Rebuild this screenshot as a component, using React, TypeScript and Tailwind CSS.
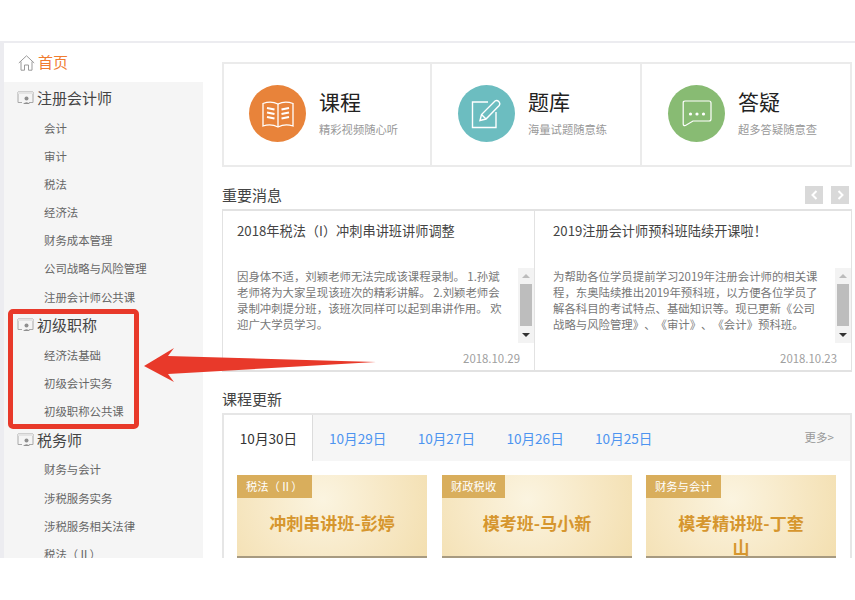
import React from "react";

const font = { fontFamily: '"Noto Sans CJK SC", "Noto Sans", sans-serif' };

function HomeIcon() {
  return (
    <svg width="17" height="16" viewBox="0 0 17 16" fill="none" stroke="#9a9a9a" strokeWidth="1">
      <path d="M0.8 8 L8.5 0.8 L16.2 8" />
      <path d="M3 6.5 V15.2 H6.5 V10 H10.5 V15.2 H14 V6.5" />
    </svg>
  );
}

function ScreenIcon() {
  return (
    <svg width="17" height="14" viewBox="0 0 17 14" fill="none" className="shrink-0">
      <path d="M5 11.5 H1 V1 H16 V11.5 H12" stroke="#a8a8a8" strokeWidth="1" />
      <rect x="1" y="1" width="15" height="2" fill="#e4e4e4" />
      <circle cx="9.5" cy="7.5" r="2" fill="#8f8f8f" />
      <path d="M6 13 Q9.5 9.5 13 13 Z" fill="#8f8f8f" />
    </svg>
  );
}

function BookIcon() {
  return (
    <svg width="32" height="28" viewBox="0 0 32 28" fill="none" stroke="#fff" strokeWidth="1.3">
      <path d="M1 3.5 Q9 0.5 16 4 Q23 0.5 31 3.5 V26 Q23 23.5 16 27 Q9 23.5 1 26 Z" />
      <path d="M16 4 V27" />
      <g strokeWidth="2">
        <path d="M5 8 L12.5 9.5" />
        <path d="M5 12.5 L12.5 14" />
        <path d="M5 17 L12.5 18.5" />
        <path d="M27 8 L19.5 9.5" />
        <path d="M27 12.5 L19.5 14" />
        <path d="M27 17 L19.5 18.5" />
      </g>
    </svg>
  );
}

function EditIcon() {
  return (
    <svg width="31" height="30" viewBox="0 0 31 30" fill="none" stroke="#fff" strokeWidth="1.4">
      <path d="M17 3 H1.5 V28.5 H25 V13" />
      <path d="M9 21.5 L10.5 15.5 L24 2 Q26 0.8 28 2.8 Q29.5 4.8 28.2 6.5 L15 20 Z" />
      <path d="M10.5 15.5 L15 20" />
    </svg>
  );
}

function ChatIcon() {
  return (
    <svg width="30" height="27" viewBox="0 0 30 27" fill="none">
      <path d="M3 1 H27 Q29 1 29 3 V19 Q29 21 27 21 H11 L3.5 25.5 Q1.2 26 1.2 24 V3 Q1 1 3 1 Z" stroke="#fff" strokeWidth="1.2" />
      <circle cx="8.5" cy="14" r="1.6" fill="#fff" />
      <circle cx="15" cy="14" r="1.6" fill="#fff" />
      <circle cx="21.5" cy="14" r="1.6" fill="#fff" />
    </svg>
  );
}

function Chevron({ left }: { left?: boolean }) {
  return (
    <div className="flex h-[18px] w-[18px] items-center justify-center bg-[#d9d9d9]">
      <svg width="7" height="10" viewBox="0 0 7 10" fill="none" stroke="#fff" strokeWidth="2">
        <path d={left ? "M5.5 1 L1.5 5 L5.5 9" : "M1.5 1 L5.5 5 L1.5 9"} />
      </svg>
    </div>
  );
}

function Group({ title, items }: { title: string; items: string[] }) {
  return (
    <div>
      <div className="flex h-[30px] items-center gap-[3px] pl-[13px] text-[15px] text-[#444]">
        <ScreenIcon />
        <span>{title}</span>
      </div>
      <div className="-mb-px pt-px">
        {items.map((t) => (
          <div key={t} className="flex h-[28.2px] items-center pl-[40px] text-[11.4px] text-[#666]">
            {t}
          </div>
        ))}
      </div>
    </div>
  );
}

function Feature({
  bg,
  title,
  sub,
  icon,
  className,
}: {
  bg: string;
  title: string;
  sub: string;
  icon: React.ReactNode;
  className: string;
}) {
  return (
    <div className={`flex pt-[21px] ${className}`}>
      <div className={`flex h-[57px] w-[57px] shrink-0 items-center justify-center rounded-full ${bg}`}>{icon}</div>
      <div className="ml-[13px]">
        <div className="mt-[1px] text-[21px] leading-[30px] text-[#222]">{title}</div>
        <div className="mt-[5px] text-[11.3px] leading-[16px] text-[#999]">{sub}</div>
      </div>
    </div>
  );
}

function ScrollBar() {
  return (
    <div className="flex h-[75px] w-[16px] shrink-0 flex-col items-center bg-[#f3f3f3]">
      <div className="flex h-[16px] items-center">
        <div className="h-0 w-0 border-x-[4px] border-b-[4px] border-x-transparent border-b-[#bcbcbc]" />
      </div>
      <div className="h-[42px] w-[12px] bg-[#bdbdbd]" />
      <div className="flex h-[17px] items-center">
        <div className="h-0 w-0 border-x-[4px] border-t-[4px] border-x-transparent border-t-[#333]" />
      </div>
    </div>
  );
}

function News({
  title,
  lines,
  date,
  className,
}: {
  title: string;
  lines: string[];
  date: string;
  className: string;
}) {
  return (
    <div className={`flex flex-col ${className}`}>
      <div className="mt-[10px] h-[20px] text-[13.2px] leading-[20px] text-[#444]">{title}</div>
      <div className="mt-[27px] flex h-[75px] justify-between">
        <div className="text-[11.4px] leading-[16px] whitespace-nowrap text-[#777] [text-spacing-trim:space-all]">
          {lines.map((l) => (
            <div key={l}>{l}</div>
          ))}
        </div>
        <ScrollBar />
      </div>
      <div className="mt-[6px] pr-[14px] text-right text-[11.4px] leading-[18px] text-[#a0a0a0]">{date}</div>
    </div>
  );
}

function CourseCard({ tag, title }: { tag: string; title: string }) {
  return (
    <div className="relative flex h-[84px] w-[190px] shrink-0 flex-col overflow-hidden border-b-[3px] border-b-[#a79a80] bg-[radial-gradient(circle_at_45%_30%,#fbf4e0_0%,#f7e8c5_55%,#f3dfb0_100%)]">
      <div className="h-[23px] self-start bg-[#d9ae5c] px-[9px] text-[11.3px] leading-[23px] whitespace-nowrap text-white">
        {tag}
      </div>
      <div className="mt-[13px] px-[24px] text-center text-[17px] leading-[24px] font-bold text-[#d6962e]">{title}</div>
    </div>
  );
}

export default function App() {
  return (
    <div style={font} className="relative h-[600px] w-[855px] overflow-hidden bg-white">
      <div className="h-[41px]" />
      <div className="flex h-[517px] overflow-hidden border-t-2 border-l-4 border-[#ececf0]">
        <aside className="w-[199px] shrink-0">
          <div className="flex h-[39px] items-center gap-[3px] bg-white pl-[14px] text-[15px] text-[#f07c30]">
            <HomeIcon />
            <span>首页</span>
          </div>
          <div className="h-[480px] overflow-hidden bg-[#f5f5f5]">
            <div className="pt-px">
              <Group title="注册会计师" items={["会计", "审计", "税法", "经济法", "财务成本管理", "公司战略与风险管理", "注册会计师公共课"]} />
              <Group title="初级职称" items={["经济法基础", "初级会计实务", "初级职称公共课"]} />
              <Group title="税务师" items={["财务与会计", "涉税服务实务", "涉税服务相关法律", "税法（Ⅱ）"]} />
            </div>
          </div>
        </aside>
        <main className="ml-[19px] w-[630px] shrink-0 pt-[19px]">
          <div className="flex h-[105px] border-2 border-[#ebebeb]">
            <Feature className="w-[208px] border-r-2 border-[#ebebeb] pl-[25px]" bg="bg-[#e8833a]" title="课程" sub="精彩视频随心听" icon={<BookIcon />} />
            <Feature className="w-[210px] border-r-2 border-[#ebebeb] pl-[26px]" bg="bg-[#6cbdc0]" title="题库" sub="海量试题随意练" icon={<EditIcon />} />
            <Feature className="flex-1 pl-[26px]" bg="bg-[#88bb73]" title="答疑" sub="超多答疑随意查" icon={<ChatIcon />} />
          </div>

          <div className="flex h-[42px] items-start justify-between pt-[18px]">
            <div className="text-[15px] leading-[20px] text-[#444]">重要消息</div>
            <div className="mr-[3px] flex gap-[8px] pt-px">
              <Chevron left />
              <Chevron />
            </div>
          </div>

          <div className="flex h-[163px] border-x border-y-2 border-[#e2e2e2]">
            <News
              className="w-[312px] border-r border-[#e2e2e2] pl-[14px]"
              title="2018年税法（I）冲刺串讲班讲师调整"
              lines={["因身体不适，刘颖老师无法完成该课程录制。 1.孙斌", "老师将为大家呈现该班次的精彩讲解。 2.刘颖老师会", "录制冲刺提分班，该班次同样可以起到串讲作用。 欢", "迎广大学员学习。"]}
              date="2018.10.29"
            />
            <News
              className="flex-1 pl-[18px]"
              title="2019注册会计师预科班陆续开课啦！"
              lines={["为帮助各位学员提前学习2019年注册会计师的相关课", "程，东奥陆续推出2019年预科班，以方便各位学员了", "解各科目的考试特点、基础知识等。现已更新《公司", "战略与风险管理》、《审计》、《会计》预科班。"]}
              date="2018.10.23"
            />
          </div>

          <div className="h-[41px] pt-[17px] text-[15px] leading-[20px] text-[#444]">课程更新</div>

          <div className="h-[160px] border-x-2 border-t-2 border-[#e6e6e6]">
            <div className="flex h-[46px] items-center bg-[#f6f6f6] text-[13.6px]">
              <div className="flex h-full w-[89px] items-center justify-center border-r border-[#dcdcdc] bg-white pl-px text-[#333]">10月30日</div>
              <div className="flex flex-1 text-[#4d94f0]">
                <span className="ml-[16px] w-[88.7px]">10月29日</span>
                <span className="w-[88.7px]">10月27日</span>
                <span className="w-[88.7px]">10月26日</span>
                <span className="w-[88.7px]">10月25日</span>
              </div>
              <div className="mr-[16px] text-[11.5px] text-[#999]">更多&gt;</div>
            </div>
            <div className="flex gap-[15px] pt-[14px] pl-[13px]">
              <CourseCard tag="税法（Ⅱ）" title="冲刺串讲班-彭婷" />
              <CourseCard tag="财政税收" title="模考班-马小新" />
              <div className="-ml-px">
                <CourseCard tag="财务与会计" title="模考精讲班-丁奎山" />
              </div>
            </div>
          </div>
        </main>
      </div>

      <div className="absolute top-[309px] left-[8px] h-[120px] w-[131px] rounded-[5px] border-[5px] border-[#e8392a]" />
      <svg className="absolute top-[340px] left-[140px]" width="240" height="50" viewBox="0 0 240 50">
        <polygon points="4,26 34,8 28,16 236,22 28,34 34,42" fill="#e8392a" />
      </svg>
    </div>
  );
}
